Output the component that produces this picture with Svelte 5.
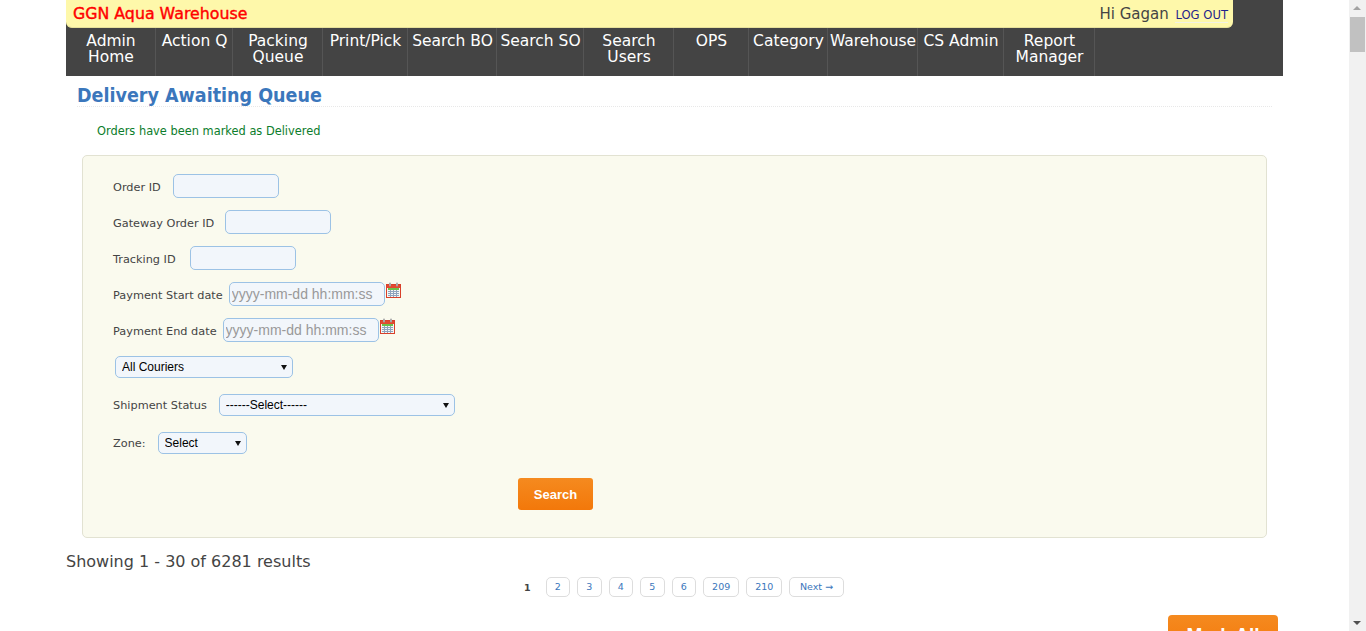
<script>
  const menu = [
    ["Admin", "Home"], ["Action Q"], ["Packing", "Queue"], ["Print/Pick"], ["Search BO"], ["Search SO"],
    ["Search", "Users"], ["OPS"], ["Category"], ["Warehouse"], ["CS Admin"], ["Report", "Manager"],
  ];
  const pages = ["2", "3", "4", "5", "6", "209", "210", "Next →"];
</script>

<div class="screen">
  <div class="page">
    <div class="wrap">
      <header>
        <div class="topbar">
          <span class="brand">GGN Aqua Warehouse</span>
          <span class="hi">Hi Gagan <a href="#top">LOG OUT</a></span>
        </div>
        <nav>
          {#each menu as lines}
            <a href="#top">{#each lines as l}<span>{l}</span>{/each}</a>
          {/each}
        </nav>
      </header>

      <main>
        <h1>Delivery Awaiting Queue</h1>
        <p class="ok">Orders have been marked as Delivered</p>

        <form class="panel">
          <div class="row order"><label for="oid">Order ID</label><input id="oid" /></div>
          <div class="row gateway"><label for="gid">Gateway Order ID</label><input id="gid" /></div>
          <div class="row tracking"><label for="tid">Tracking ID</label><input id="tid" /></div>
          <div class="row date">
            <label for="sd">Payment Start date</label>
            <input id="sd" placeholder="yyyy-mm-dd hh:mm:ss" />
            {@render calendar()}
          </div>
          <div class="row date">
            <label for="ed">Payment End date</label>
            <input id="ed" placeholder="yyyy-mm-dd hh:mm:ss" />
            {@render calendar()}
          </div>
          <div class="row couriers">
            <span class="sel"><select class="s-courier"><option>All Couriers</option></select></span>
          </div>
          <div class="row ship">
            <label for="st">Shipment Status</label>
            <span class="sel"><select id="st" class="s-status"><option>------Select------</option></select></span>
          </div>
          <div class="row zone">
            <label for="zn">Zone:</label>
            <span class="sel"><select id="zn" class="s-zone"><option>Select</option></select></span>
          </div>
          <button type="button" class="btn search">Search</button>
        </form>

        <div class="showing">Showing 1 - 30 of 6281 results</div>
        <div class="pager">
          <b>1</b>
          {#each pages as p}<a href="#top">{p}</a>{/each}
        </div>
        <div class="actions"><button type="button" class="btn mark">Mark All</button></div>
      </main>
    </div>
  </div>

  <aside class="scrollbar">
    <i class="up"></i>
    <i class="thumb"></i>
    <i class="down"></i>
  </aside>
</div>

{#snippet calendar()}
  <svg class="cal" width="15" height="16" viewBox="0 0 15 16">
    <rect x="0.5" y="2.5" width="14" height="13" fill="#f4f6f4" stroke="#d8402a" />
    <rect x="1" y="3" width="13" height="3" fill="#e2492f" />
    <rect x="2" y="6" width="11" height="2" fill="#6cc04a" />
    <path d="M2 9.5h11M2 11.5h11M2 13.5h11M4.5 8v7M7.5 8v7M10.5 8v7" stroke="#8fa3bd" fill="none" />
    <rect x="3" y="0.5" width="2" height="4" rx="1" fill="#a9a9a9" />
    <rect x="10" y="0.5" width="2" height="4" rx="1" fill="#a9a9a9" />
  </svg>
{/snippet}

<style>
  :global(body) {
    margin: 0;
    overflow: hidden;
    font-family: "DejaVu Sans", sans-serif;
    background: #fff;
  }

  .screen {
    display: flex;
    height: 631px;
    overflow: hidden;
  }

  .page {
    flex: 1;
    min-width: 0;
  }

  .wrap {
    width: 1217px;
    margin: 0 auto;
  }

  header {
    background: #444;
    height: 76px;
  }

  .topbar {
    width: 1167px;
    height: 28px;
    box-sizing: border-box;
    padding: 0 5px 0 7px;
    display: flex;
    justify-content: space-between;
    align-items: center;
    background: #fef8aa;
    border-bottom: 1px solid #e6e19a;
    border-radius: 0 0 6px 6px;
  }

  .brand {
    color: #f00;
    font-size: 15.8px;
    -webkit-text-stroke: 0.4px #f00;
  }

  .hi {
    color: #444;
    font-size: 15px;
  }

  .hi a {
    color: #1f1f8a;
    font-size: 11.6px;
    text-decoration: none;
    margin-left: 2px;
    border-bottom: 1px solid #f2f2e4;
  }

  nav {
    display: grid;
    grid-template-columns: 90px 77px 90px 85px 89px 87px 90px 75px 79px 90px 86px 91px;
    height: 48px;
  }

  nav a {
    display: flex;
    flex-direction: column;
    align-items: center;
    box-sizing: border-box;
    padding: 5px 0 0 1px;
    color: #fff;
    font-size: 15.5px;
    line-height: 16px;
    text-decoration: none;
    white-space: nowrap;
    border-right: 1px solid #555;
  }

  main {
    padding-top: 6px;
  }

  h1 {
    margin: 0 11px;
    height: 24px;
    color: #3b77bc;
    font-family: "DejaVu Sans Condensed", "DejaVu Sans", sans-serif;
    font-size: 19.5px;
    line-height: 28px;
    font-weight: 700;
    border-bottom: 1px dotted #e8e8e8;
  }

  .ok {
    margin: 17px 0 0 31px;
    color: #0c7d2c;
    font-size: 11.4px;
    line-height: 14px;
  }

  .panel {
    margin: 17px 16px 0;
    height: 383px;
    box-sizing: border-box;
    padding: 18px 30px 0;
    background: #fafaee;
    border: 1px solid #e2e2d2;
    border-radius: 5px;
    display: flex;
    flex-direction: column;
    align-items: flex-start;
  }

  .row {
    height: 36px;
    display: flex;
    align-items: flex-start;
    gap: 10px;
  }

  .order {
    gap: 12px;
  }

  .gateway {
    gap: 11px;
  }

  .tracking {
    gap: 14px;
  }

  label {
    color: #444;
    font-size: 11.3px;
    line-height: 14px;
    padding-top: 7px;
    white-space: nowrap;
  }

  input {
    width: 106px;
    height: 24px;
    box-sizing: border-box;
    padding: 0 2px;
    background: #f2f6fb;
    border: 1px solid #9cc2e5;
    border-radius: 5px;
    font: 14px "Liberation Sans", sans-serif;
    outline: none;
  }

  input::placeholder {
    color: #999;
  }

  .date {
    gap: 6px;
  }

  .date input {
    width: 156px;
  }

  .cal {
    margin-left: -5px;
  }

  .sel {
    position: relative;
    display: block;
  }

  .sel::after {
    content: "";
    position: absolute;
    right: 6px;
    top: 9px;
    border-left: 3px solid transparent;
    border-right: 3px solid transparent;
    border-top: 5px solid #111;
    pointer-events: none;
  }

  select {
    display: block;
    appearance: none;
    height: 22px;
    box-sizing: border-box;
    padding: 0 0 0 6px;
    background: #f2f6fb;
    border: 1px solid #9cc2e5;
    border-radius: 5px;
    color: #000;
    font: 12px "Liberation Sans", sans-serif;
  }

  .couriers {
    height: 38px;
    margin-top: 2px;
    padding-left: 2px;
  }

  .ship {
    height: 38px;
    gap: 12px;
  }

  .zone {
    gap: 12px;
  }

  .s-courier {
    width: 178px;
  }

  .s-status {
    width: 236px;
  }

  .s-zone {
    width: 89px;
  }

  .ship label, .zone label {
    padding-top: 5px;
  }

  .btn {
    border: 0;
    border-radius: 3px;
    color: #fff;
    font-family: "Liberation Sans", sans-serif;
    font-weight: 700;
    background: linear-gradient(#f58a1f, #f3780a);
  }

  .search {
    width: 75px;
    height: 32px;
    margin: 10px 0 0 405px;
    font-size: 13px;
  }

  .showing {
    margin-top: 15px;
    color: #444;
    font-size: 16px;
    line-height: 18px;
  }

  .pager {
    margin-top: 6px;
    padding-left: 18.5px;
    display: flex;
    justify-content: center;
    align-items: center;
    gap: 7px;
    height: 20px;
    font-size: 9.5px;
  }

  .pager b {
    color: #444;
    margin-right: 8px;
  }

  .pager a {
    display: block;
    min-width: 24.5px;
    height: 20px;
    box-sizing: border-box;
    padding: 0 8px;
    text-align: center;
    line-height: 18px;
    color: #3b77bc;
    text-decoration: none;
    border: 1px solid #ddd;
    border-radius: 5px;
  }

  .pager a:last-child {
    padding: 0 9.5px;
  }

  .actions {
    margin-top: 18px;
    display: flex;
    justify-content: flex-end;
    padding-right: 5px;
  }

  .mark {
    width: 110px;
    height: 40px;
    font-size: 19px;
    border-radius: 4px;
  }

  .scrollbar {
    width: 17px;
    flex: none;
    background: #f1f1f1;
    position: relative;
  }

  .scrollbar i {
    position: absolute;
    display: block;
  }

  .thumb {
    left: 1px;
    right: 1px;
    top: 17px;
    height: 35px;
    background: #c1c1c1;
  }

  .up, .down {
    left: 4px;
    width: 0;
    height: 0;
    border-left: 4px solid transparent;
    border-right: 4px solid transparent;
  }

  .up {
    top: 6px;
    border-bottom: 4px solid #a3a3a3;
  }

  .down {
    bottom: 6px;
    border-top: 4px solid #505050;
  }
</style>
